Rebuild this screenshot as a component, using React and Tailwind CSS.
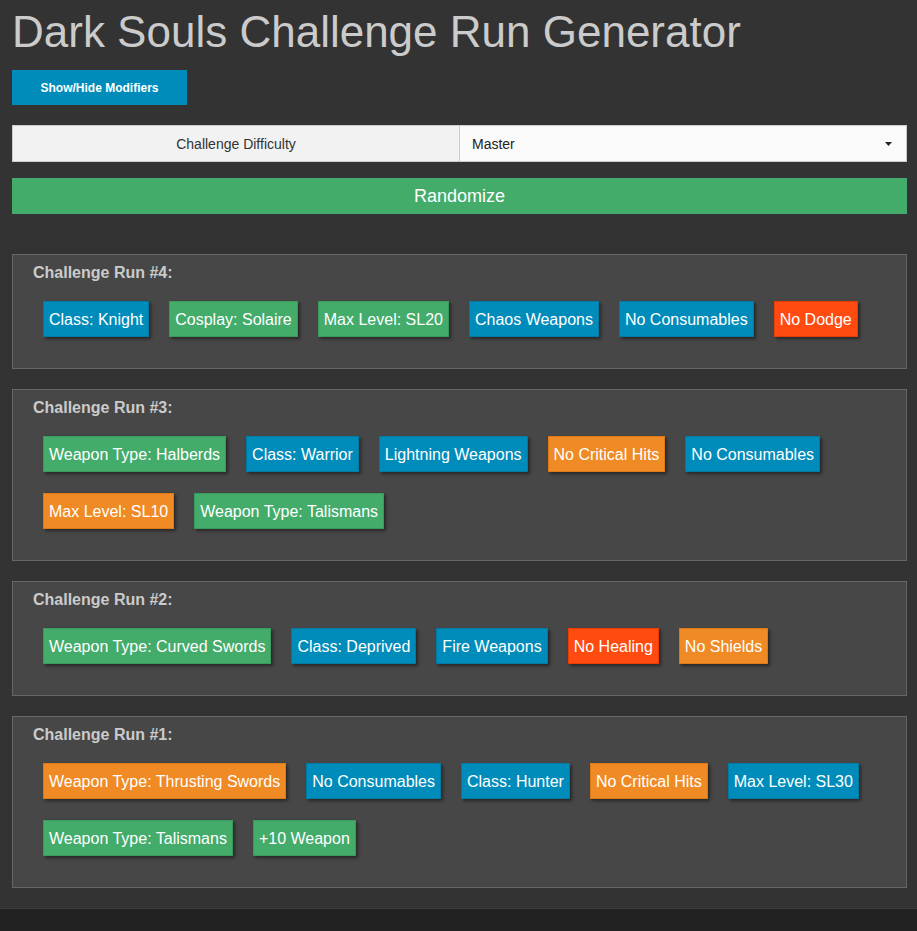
import React from 'react';

const colors = {
  blue: 'bg-[#008cba] border-[#007aa3]',
  green: 'bg-[#43ac6a] border-[#3a9a5e]',
  orange: 'bg-[#f08a24] border-[#de7a16]',
  red: 'bg-[#ff4a10] border-[#e83e06]',
};

const runs = [
  {
    id: 4,
    tags: [
      ['Class: Knight', 'blue'],
      ['Cosplay: Solaire', 'green'],
      ['Max Level: SL20', 'green'],
      ['Chaos Weapons', 'blue'],
      ['No Consumables', 'blue'],
      ['No Dodge', 'red'],
    ],
  },
  {
    id: 3,
    tags: [
      ['Weapon Type: Halberds', 'green'],
      ['Class: Warrior', 'blue'],
      ['Lightning Weapons', 'blue'],
      ['No Critical Hits', 'orange'],
      ['No Consumables', 'blue'],
      ['Max Level: SL10', 'orange'],
      ['Weapon Type: Talismans', 'green'],
    ],
  },
  {
    id: 2,
    tags: [
      ['Weapon Type: Curved Swords', 'green'],
      ['Class: Deprived', 'blue'],
      ['Fire Weapons', 'blue'],
      ['No Healing', 'red'],
      ['No Shields', 'orange'],
    ],
  },
  {
    id: 1,
    tags: [
      ['Weapon Type: Thrusting Swords', 'orange'],
      ['No Consumables', 'blue'],
      ['Class: Hunter', 'blue'],
      ['No Critical Hits', 'orange'],
      ['Max Level: SL30', 'blue'],
      ['Weapon Type: Talismans', 'green'],
      ['+10 Weapon', 'green'],
    ],
  },
];

const Tag = ({ label, color }) => (
  <div
    className={`h-[36px] px-[5px] pt-[1px] flex items-center border text-[16px] text-white shadow-[2px_2px_3px_rgba(0,0,0,0.45)] ${colors[color]}`}
  >
    {label}
  </div>
);

const App = () => {
  return (
    <div className="min-h-screen flex flex-col bg-[#222] font-['Liberation_Sans',Arial,sans-serif]">
      <div className="bg-[#333] pl-[12px] pr-[10px] pb-[20px]">
        {/* Header */}
        <h1 className="pt-[7px] h-[57px] leading-[50px] text-[44px] text-[#cbcbcb]">
          Dark Souls Challenge Run Generator
        </h1>

        <button className="mt-[13px] w-[175px] h-[35px] bg-[#008cba] text-white text-[12px] font-bold">
          Show/Hide Modifiers
        </button>

        {/* Difficulty */}
        <div className="mt-[20px] flex h-[37px] text-[14px]">
          <div className="w-[448px] flex items-center justify-center pt-[1px] bg-[#f2f2f2] border border-[#cccccc] text-[#333]">
            Challenge Difficulty
          </div>
          <div className="flex-1 flex items-center justify-between pt-[1px] pl-[12px] pr-[14px] bg-[#fafafa] border border-l-0 border-[#cccccc] text-[#222]">
            <span>Master</span>
            <svg width="7" height="4" viewBox="0 0 7 4">
              <path d="M0 0 H7 L3.5 4 Z" fill="#222" />
            </svg>
          </div>
        </div>

        <button className="mt-[16px] w-full h-[36px] bg-[#43ac6a] text-white text-[18px]">
          Randomize
        </button>

        {/* Runs */}
        <div className="mt-[40px] flex flex-col gap-[20px]">
          {runs.map((run) => (
            <div
              key={run.id}
              className="bg-[#474747] border border-[#666] pt-[8px] pb-[31px] pl-[20px] pr-[20px]"
            >
              <div className="h-[20px] leading-[20px] text-[16px] font-bold text-[#cbcbcb]">
                Challenge Run #{run.id}:
              </div>
              <div className="mt-[18px] ml-[10px] flex flex-wrap gap-x-[20px] gap-y-[21px]">
                {run.tags.map(([label, color], i) => (
                  <Tag key={i} label={label} color={color} />
                ))}
              </div>
            </div>
          ))}
        </div>
      </div>
      <footer className="flex-1 min-h-[40px] bg-[#222] border-t border-[#3d3d3d]" />
    </div>
  );
};

export default App;
